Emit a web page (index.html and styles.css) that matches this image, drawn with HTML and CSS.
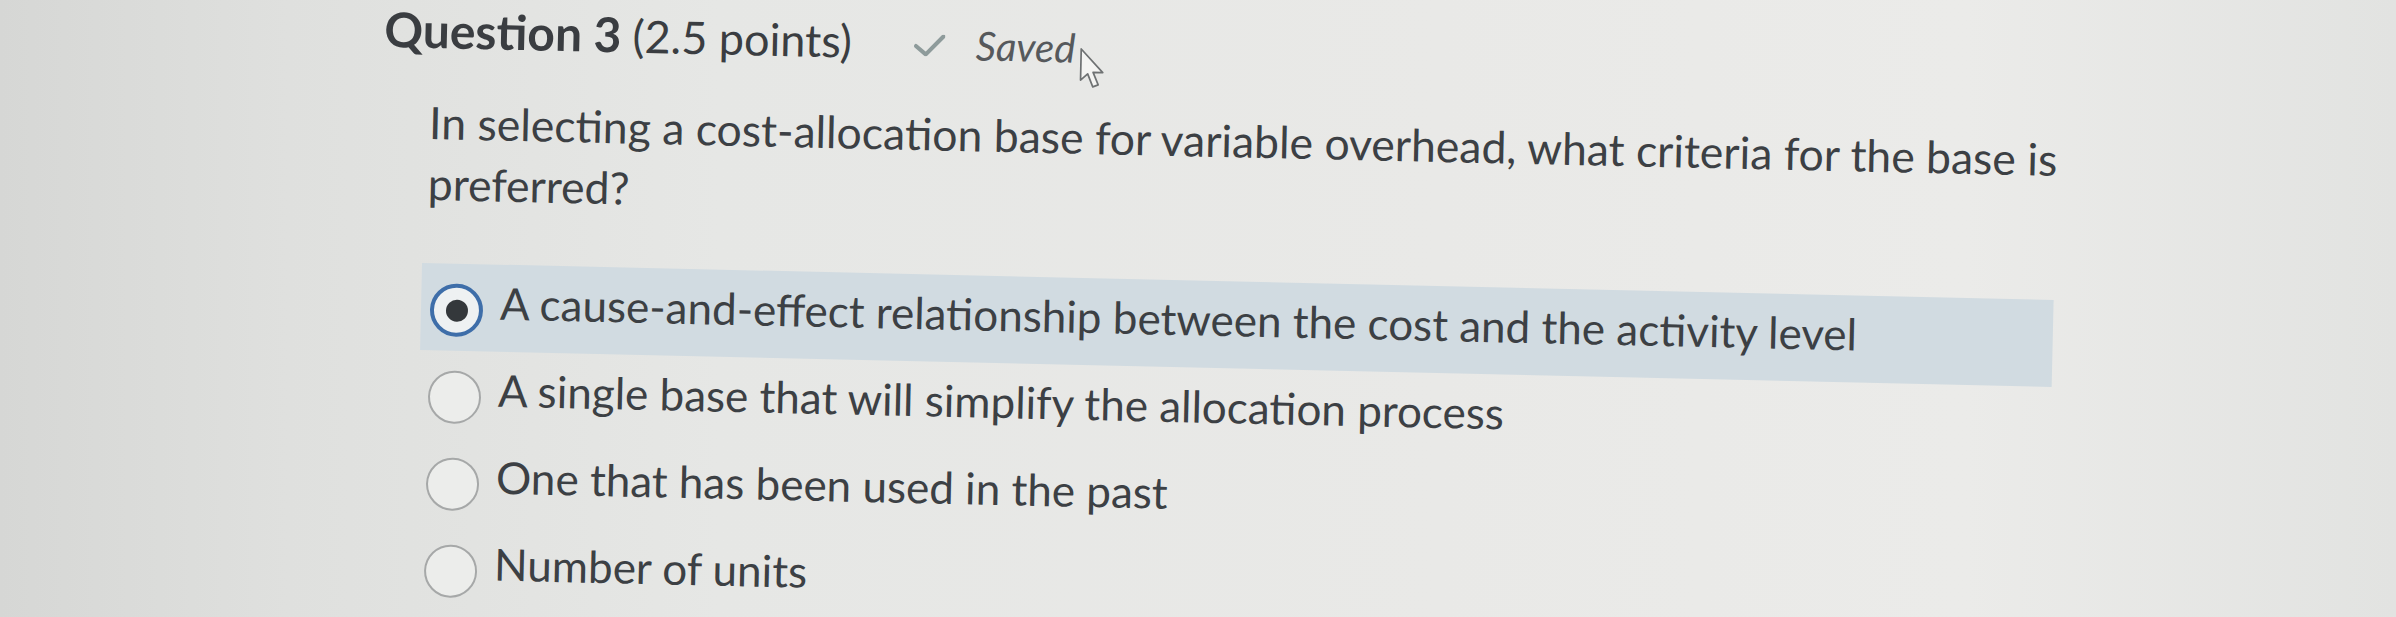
FILE: index.html
```html
<!DOCTYPE html>
<html lang="en">
<head>
<meta charset="utf-8">
<title>Question 3</title>
<link rel="stylesheet" href="styles.css">
</head>
<body>
<main class="quiz">
  <header class="q-head">
    <h2 class="q-title">Question 3</h2>
    <span class="q-points">(2.5 points)</span>
    <span class="q-status">
      <svg class="check" viewBox="0 0 34 24" width="31" height="22" aria-hidden="true">
        <polyline points="2,13 13,22 32,2" fill="none" stroke="#8e9b9b" stroke-width="4.5" stroke-linecap="round" stroke-linejoin="round"/>
      </svg>
      <span class="saved">Saved</span>
    </span>
    <svg class="cursor" viewBox="0 0 26 40" width="28" height="43" aria-hidden="true">
      <path d="M2 2 L2 31 L8.5 25 L13.5 37 L18.5 35 L13.5 23.5 L22.5 23.5 Z" fill="#f4f4f2" stroke="#6f7273" stroke-width="1.6" stroke-linejoin="round"/>
    </svg>
  </header>

  <p class="q-text">In selecting a cost-allocation base for variable overhead, what criteria for the base is preferred?</p>

  <ul class="answers">
    <li class="answer is-selected">
      <span class="radio"><span class="dot"></span></span>
      <span class="answer-text">A cause-and-effect relationship between the cost and the activity level</span>
    </li>
    <li class="answer">
      <span class="radio"></span>
      <span class="answer-text">A single base that will simplify the allocation process</span>
    </li>
    <li class="answer">
      <span class="radio"></span>
      <span class="answer-text">One that has been used in the past</span>
    </li>
    <li class="answer">
      <span class="radio"></span>
      <span class="answer-text">Number of units</span>
    </li>
  </ul>
</main>
</body>
</html>
```

FILE: styles.css
```css
html, body {
  margin: 0;
  padding: 0;
  height: 100%;
}

body {
  overflow: hidden;
  background: linear-gradient(90deg, #d6d7d5 0%, #dfe0de 12%, #e6e7e5 30%, #e9e9e7 60%, #ebebe9 82%, #e2e3e1 100%);
  font-family: Lato, "Open Sans", "Noto Sans", sans-serif;
  color: #3c4044;
}

.quiz {
  padding: 5px 0 0 385px;
  transform: rotate(1.3deg);
  transform-origin: 385px 0;
}

.q-head {
  position: relative;
  display: flex;
  align-items: baseline;
  height: 48px;
  line-height: 48px;
}

.q-title {
  margin: 0;
  font-size: 48px;
  font-weight: 700;
  line-height: 48px;
  color: #3a3d41;
}

.q-points {
  margin-left: 11px;
  font-size: 45px;
  font-weight: 400;
  color: #3a3d41;
}

.q-status {
  display: inline-flex;
  align-items: baseline;
  margin-left: 62px;
}

.check {
  align-self: center;
  position: relative;
  top: 1px;
}

.saved {
  margin-left: 31px;
  font-size: 40px;
  font-style: italic;
  color: #56595c;
}

.cursor {
  position: absolute;
  left: 695px;
  top: 26px;
}

.q-text {
  margin: 37px 0 0 47px;
  width: 1660px;
  font-size: 44.5px;
  line-height: 61px;
  color: #3c4044;
}

.answers {
  list-style: none;
  margin: 50px 0 0 43px;
  padding: 0;
  display: flex;
  flex-direction: column;
  align-items: flex-start;
}

.answer {
  display: flex;
  align-items: flex-start;
  height: 87px;
  padding-right: 20px;
}

.answer.is-selected {
  width: 1632px;
  box-sizing: border-box;
  background: #d1dbe1;
}

.answer:last-child {
  height: 72px;
}

.radio {
  flex: none;
  box-sizing: border-box;
  width: 53px;
  height: 53px;
  margin: 20px 0 0 9px;
  border-radius: 50%;
  border: 2.5px solid #a6a8a8;
  background: #ecedeb;
  display: flex;
  align-items: center;
  justify-content: center;
}

.is-selected .radio {
  border: 4.5px solid #3e6ea9;
  background: #eef1f2;
}

.dot {
  width: 22px;
  height: 22px;
  border-radius: 50%;
  background: #34383b;
}

.answer-text {
  margin-left: 17px;
  padding-top: 12px;
  font-size: 44px;
  line-height: 53px;
  white-space: nowrap;
}
```
